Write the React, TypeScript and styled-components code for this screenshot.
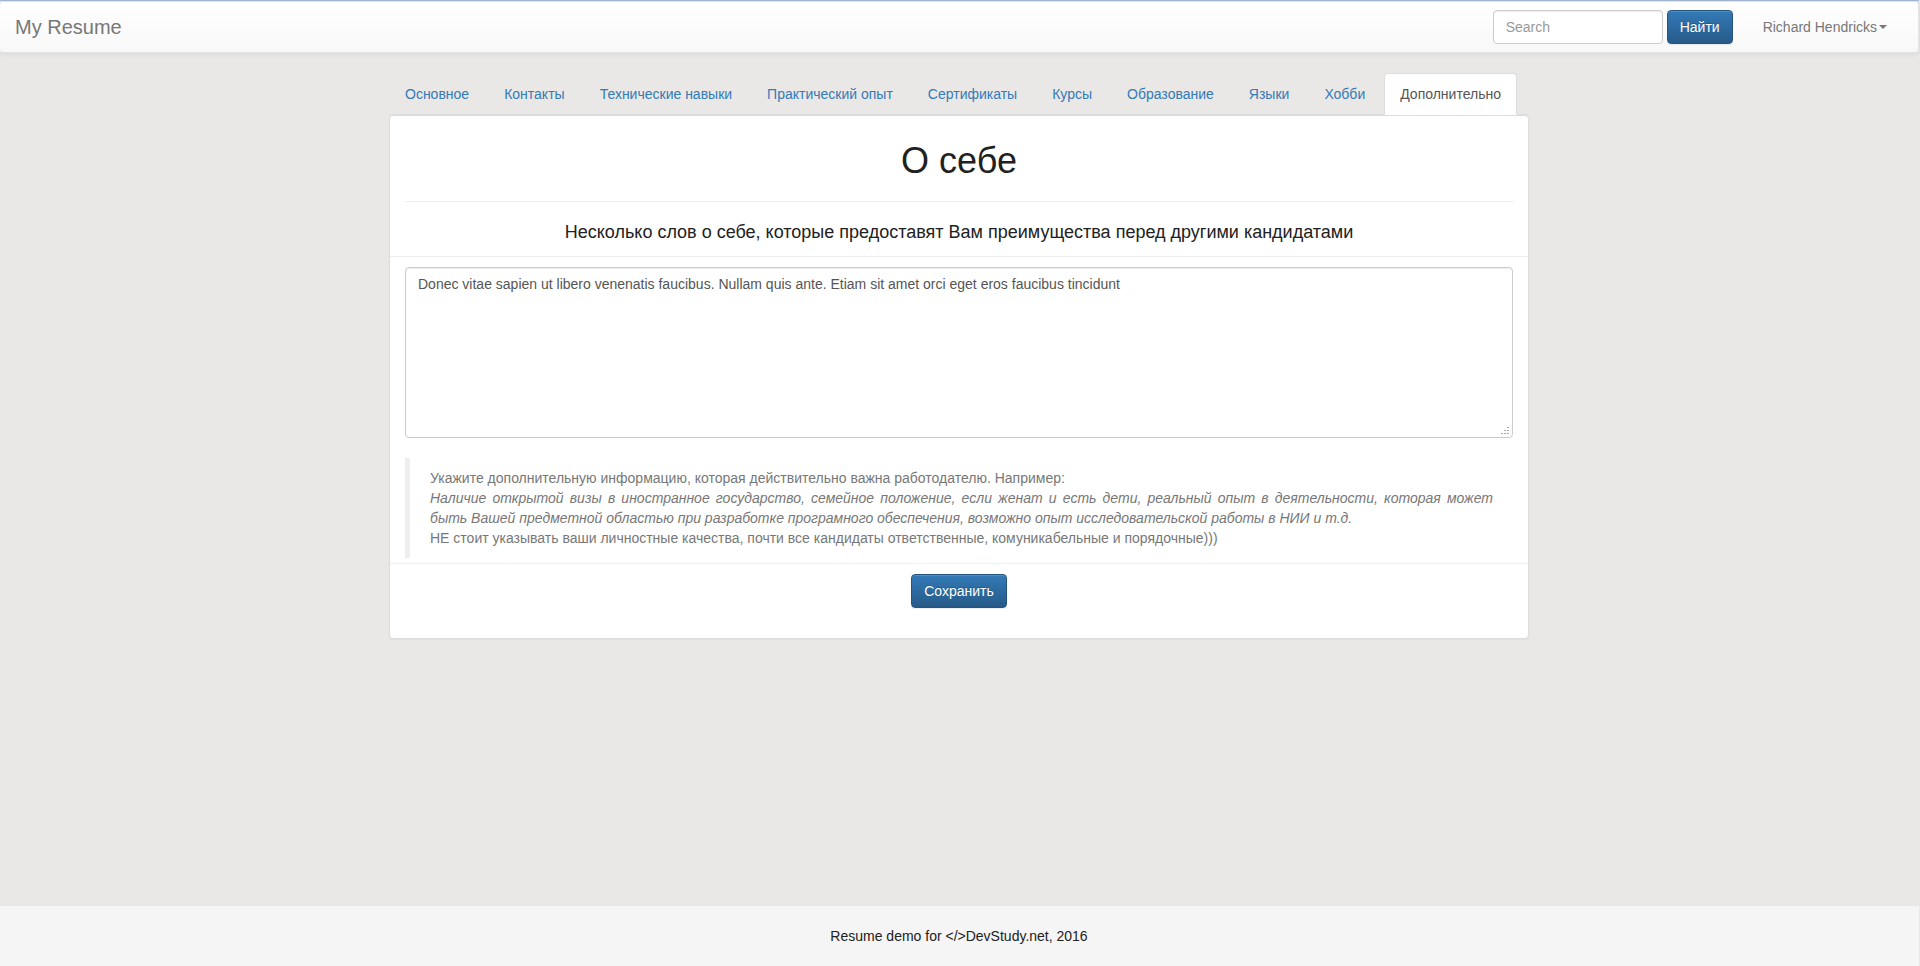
import React from "react";
import styled, { createGlobalStyle } from "styled-components";

const GlobalStyle = createGlobalStyle`
  *, *::before, *::after { box-sizing: border-box; }
  body {
    margin: 0;
    background: #e9e8e6;
    color: #212121;
    font: 14px/20px "Liberation Sans", Arial, sans-serif;
  }
  button, input, textarea { font: inherit; }
`;

const Page = styled.div`
  display: flex;
  flex-direction: column;
  min-height: 100vh;
  margin: 0 1px 0 -1px;
  border-top: 1px solid #a5b8d2;
`;

const Navbar = styled.header`
  display: flex;
  align-items: center;
  justify-content: space-between;
  min-height: 52px;
  margin-bottom: 20px;
  padding: 0 15px;
  border: 1px solid #e4e4e4;
  border-radius: 4px;
  background: linear-gradient(#fff, #f8f8f8);
  box-shadow: inset 0 1px 0 rgba(255, 255, 255, 0.15), 0 1px 5px rgba(0, 0, 0, 0.075);
`;

const Brand = styled.a`
  color: #777;
  font-size: 20px;
  text-decoration: none;
  text-shadow: 0 1px 0 rgba(255, 255, 255, 0.25);
`;

const NavRight = styled.div`
  display: flex;
  align-items: center;
  gap: 30px;
`;

const SearchForm = styled.form`
  display: flex;
  gap: 4px;
`;

const SearchInput = styled.input`
  width: 170px;
  height: 34px;
  padding: 6px 12px;
  border: 1px solid #ccc;
  border-radius: 4px;
  background: #fff;
  color: #555;
  box-shadow: inset 0 1px 1px rgba(0, 0, 0, 0.075);
  &::placeholder { color: #999; opacity: 1; }
`;

const PrimaryButton = styled.button`
  padding: 6px 12px;
  border: 1px solid #245580;
  border-radius: 4px;
  background: linear-gradient(#337ab7, #265a88);
  color: #fff;
  text-shadow: 0 -1px 0 rgba(0, 0, 0, 0.2);
  box-shadow: inset 0 1px 0 rgba(255, 255, 255, 0.15), 0 1px 1px rgba(0, 0, 0, 0.075);
  cursor: pointer;
`;

const UserMenu = styled.button`
  display: flex;
  align-items: center;
  gap: 2px;
  padding: 0 16px 0 0;
  border: 0;
  background: none;
  color: #777;
  cursor: pointer;
`;

const Caret = styled.span`
  border-top: 4px solid;
  border-right: 4px solid transparent;
  border-left: 4px solid transparent;
`;

const Container = styled.main`
  flex: 1;
  width: 100%;
  max-width: 1140px;
  margin: 0 auto;
`;

const Tabs = styled.nav`
  display: flex;
  flex-wrap: wrap;
  gap: 3px;
  border-bottom: 1px solid #ddd;
`;

const Tab = styled.a<{ $active?: boolean }>`
  margin-bottom: -1px;
  padding: 10px 15px;
  border: 1px solid transparent;
  border-color: ${(p) => (p.$active ? "#ddd #ddd transparent" : "transparent")};
  border-radius: 4px 4px 0 0;
  background: ${(p) => (p.$active ? "#fff" : "transparent")};
  color: ${(p) => (p.$active ? "#555" : "#337ab7")};
  text-decoration: none;
`;

const Panel = styled.form`
  margin-bottom: 20px;
  padding-bottom: 30px;
  border: 1px solid #ddd;
  border-radius: 4px;
  background: #fff;
  box-shadow: 0 1px 2px rgba(0, 0, 0, 0.05);
`;

const Title = styled.h1`
  margin: 0 15px;
  padding: 25px 0 20px;
  border-bottom: 1px solid #eee;
  font-size: 36px;
  font-weight: 400;
  line-height: 40px;
  text-align: center;
`;

const Subtitle = styled.label`
  display: block;
  padding: 20px 15px 14px;
  font-size: 18px;
  text-align: center;
`;

const Section = styled.div`
  padding: 10px 15px 5px;
  border-top: 1px solid #eee;
`;

const About = styled.textarea`
  display: block;
  width: 100%;
  height: 171px;
  margin-bottom: 20px;
  padding: 6px 12px;
  border: 1px solid #ccc;
  border-radius: 4px;
  color: #555;
  box-shadow: inset 0 1px 1px rgba(0, 0, 0, 0.075);
  resize: vertical;

  &::-webkit-resizer {
    background:
      linear-gradient(#aaa, #aaa) right 3px bottom 3px / 2px 1px,
      linear-gradient(#aaa, #aaa) right 6px bottom 3px / 2px 1px,
      linear-gradient(#aaa, #aaa) right 9px bottom 3px / 2px 1px,
      linear-gradient(#aaa, #aaa) right 3px bottom 6px / 2px 1px,
      linear-gradient(#aaa, #aaa) right 6px bottom 6px / 2px 1px,
      linear-gradient(#aaa, #aaa) right 3px bottom 9px / 2px 1px;
    background-repeat: no-repeat;
  }
`;

const Hint = styled.blockquote`
  margin: 0;
  padding: 10px 20px;
  border-left: 5px solid #eee;
  color: #777;
  text-align: justify;
`;

const Actions = styled(Section)`
  display: flex;
  justify-content: center;
  padding-bottom: 0;
`;

const Footer = styled.footer`
  padding: 20px 15px;
  background: #f5f5f5;
  text-align: center;
`;

const tabs = [
  "Основное",
  "Контакты",
  "Технические навыки",
  "Практический опыт",
  "Сертификаты",
  "Курсы",
  "Образование",
  "Языки",
  "Хобби",
  "Дополнительно",
];

export default function App() {
  return (
    <>
      <GlobalStyle />
      <Page>
        <Navbar>
          <Brand href="#">My Resume</Brand>
          <NavRight>
            <SearchForm>
              <SearchInput type="text" placeholder="Search" aria-label="Search" />
              <PrimaryButton type="button">Найти</PrimaryButton>
            </SearchForm>
            <UserMenu type="button">
              Richard Hendricks
              <Caret />
            </UserMenu>
          </NavRight>
        </Navbar>
        <Container>
          <Tabs>
            {tabs.map((name) => (
              <Tab key={name} href="#" $active={name === "Дополнительно"}>
                {name}
              </Tab>
            ))}
          </Tabs>
          <Panel>
            <Title>О себе</Title>
            <Subtitle htmlFor="about">
              Несколько слов о себе, которые предоставят Вам преимущества перед другими кандидатами
            </Subtitle>
            <Section>
              <About
                id="about"
                defaultValue="Donec vitae sapien ut libero venenatis faucibus. Nullam quis ante. Etiam sit amet orci eget eros faucibus tincidunt"
              />
              <Hint>
                Укажите дополнительную информацию, которая действительно важна работодателю. Например:
                <br />
                <em>
                  Наличие открытой визы в иностранное государство, семейное положение, если женат и есть дети,
                  реальный опыт в деятельности, которая может быть Вашей предметной областью при разработке
                  програмного обеспечения, возможно опыт исследовательской работы в НИИ и т.д.
                </em>
                <br />
                НЕ стоит указывать ваши личностные качества, почти все кандидаты ответственные, комуникабельные и
                порядочные)))
              </Hint>
            </Section>
            <Actions>
              <PrimaryButton type="button">Сохранить</PrimaryButton>
            </Actions>
          </Panel>
        </Container>
        <Footer>Resume demo for &lt;/&gt;DevStudy.net, 2016</Footer>
      </Page>
    </>
  );
}
